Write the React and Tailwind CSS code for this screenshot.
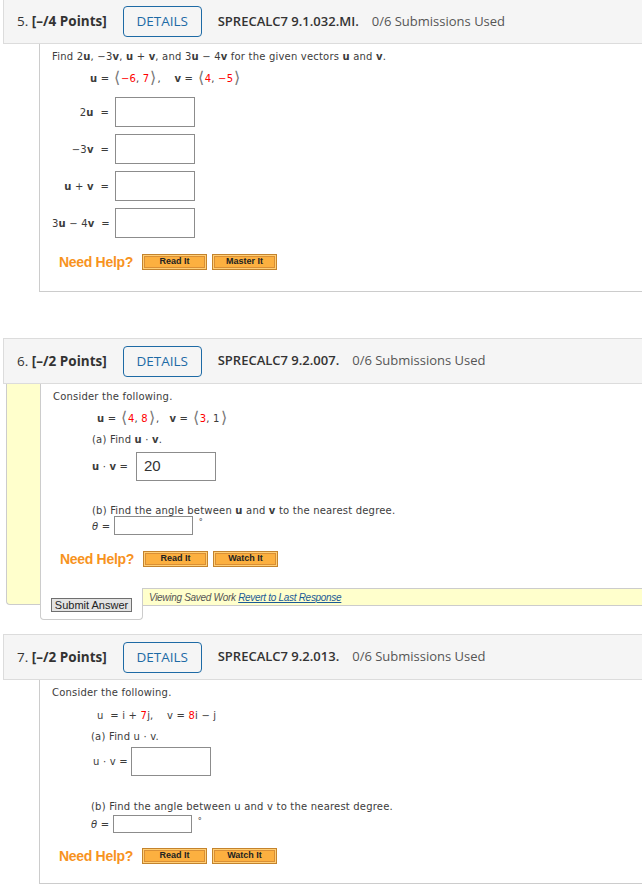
import React from "react";

const txt = "font-['DejaVu_Sans','Noto_Sans',sans-serif] text-[10px] tracking-[0.2px] text-[#3c3c3c]";
const red = "text-[#ff0000]";

function Header({ num, pts, code, cls }) {
  return (
    <div className={"ml-[3px] bg-[#f5f5f5] border-y border-l border-[#dcdcdc] flex items-center font-['Open_Sans',sans-serif] text-[13px] text-[#333] " + cls}>
      <span className="ml-[13px] whitespace-nowrap text-[13.5px]">
        {num}. <span className="font-bold">[–/{pts} Points]</span>
      </span>
      <div className="ml-[16px] h-[31px] w-[79px] border-[1.5px] border-[#1d6aa5] rounded-[4px] flex items-center justify-center text-[#1d6aa5] text-[13.5px]">
        DETAILS
      </div>
      <span className="ml-[16px] font-semibold whitespace-nowrap">{code}</span>
      <span className="ml-[13px] text-[#555] whitespace-nowrap">0/6 Submissions Used</span>
    </div>
  );
}

function Box({ w = "w-[80px]", h = "h-[30px]", children }) {
  return (
    <div className={"shrink-0 border border-[#8c8c8c] bg-white flex items-center pl-[7px] font-['Liberation_Sans',Arial,sans-serif] text-[15px] tracking-normal text-[#333] " + w + " " + h}>
      {children}
    </div>
  );
}

function HelpBtn({ label }) {
  return (
    <div className="h-[16px] w-[65px] bg-[#fcb040] border border-[#c4832c] shadow-[inset_0_0_0_1px_#ffcf77,inset_0_0_0_2px_#d98f35] flex items-center justify-center font-['Liberation_Sans',Arial,sans-serif] font-bold text-[9px] tracking-normal text-[#222]">
      {label}
    </div>
  );
}

function NeedHelp({ second, mt }) {
  return (
    <div className={"flex items-center ml-[7px] h-[16px] " + mt}>
      <span className="font-['Liberation_Sans',Arial,sans-serif] font-bold text-[14px] text-[#f7931e] tracking-[-0.3px]">Need Help?</span>
      <div className="ml-[9px] flex gap-[5px]">
        <HelpBtn label="Read It" />
        <HelpBtn label={second} />
      </div>
    </div>
  );
}

function Br({ c }) {
  return <span className="text-[16px] text-[#777] font-light leading-[10px] mx-[1px]">{c}</span>;
}

function Q5() {
  const rows = ["2u", "-3v", "u+v", "3u-4v"];
  return (
    <div>
      <Header num="5" pts="4" code="SPRECALC7 9.1.032.MI." cls="mt-[-1px] h-[45px]" />
      <div className={"ml-[39px] border-l border-b border-[#cccccc] pl-[12px] pt-[6px] pb-[21px] " + txt}>
        <div className="h-[14px] leading-[14px] whitespace-nowrap">
          Find 2<b>u</b>, −3<b>v</b>, <b>u</b> + <b>v</b>, and 3<b>u</b> − 4<b>v</b> for the given vectors <b>u</b> and <b>v</b>.
        </div>
        <div className="mt-[5px] ml-[38px] h-[18px] flex items-center whitespace-nowrap">
          <b>u</b>&nbsp;=&nbsp;<Br c="⟨" /><span className={red}>−6</span>,&nbsp;<span className={red}>7</span><Br c="⟩" />,&nbsp;&nbsp;&nbsp;&nbsp;<b>v</b>&nbsp;=&nbsp;<Br c="⟨" /><span className={red}>4</span>,&nbsp;<span className={red}>−5</span><Br c="⟩" />
        </div>
        <div className="mt-[10px] flex flex-col gap-[7px]">
          {rows.map((k) => (
            <div key={k} className="flex items-center">
              <div className="w-[57px] text-right whitespace-nowrap">
                {k === "2u" && <>2<b>u</b>&nbsp; =</>}
                {k === "-3v" && <>−3<b>v</b>&nbsp; =</>}
                {k === "u+v" && <><b>u</b> + <b>v</b>&nbsp; =</>}
                {k === "3u-4v" && <>3<b>u</b> − 4<b>v</b>&nbsp; =</>}
              </div>
              <div className="ml-[6px]">
                <Box />
              </div>
            </div>
          ))}
        </div>
        <NeedHelp second="Master It" mt="mt-[16px]" />
      </div>
    </div>
  );
}

function Q6() {
  return (
    <div>
      <Header num="6" pts="2" code="SPRECALC7 9.2.007." cls="mt-[46px] h-[46px]" />
      <div className="flex ml-[6px]">
        <div className="w-[34px] mb-[15px] bg-[#ffffcc] border-l border-b border-[#cccccc] rounded-bl-[4px]" />
        <div className="flex-1 flex flex-col">
          <div className={"bg-white border-l border-[#cccccc] pl-[12px] pt-[6px] h-[204px] " + txt}>
            <div className="h-[14px] leading-[14px]">Consider the following.</div>
            <div className="mt-[5px] ml-[44px] h-[18px] flex items-center whitespace-nowrap">
              <b>u</b>&nbsp;=&nbsp;<Br c="⟨" /><span className={red}>4</span>,&nbsp;<span className={red}>8</span><Br c="⟩" />,&nbsp;&nbsp;&nbsp;<b>v</b>&nbsp;=&nbsp;<Br c="⟨" /><span className={red}>3</span>,&nbsp;1<Br c="⟩" />
            </div>
            <div className="mt-[6px] ml-[39px] h-[14px] leading-[14px]">(a) Find <b>u</b> · <b>v</b>.</div>
            <div className="mt-[5px] ml-[39px] flex items-center">
              <span className="whitespace-nowrap w-[44px]"><b>u</b> · <b>v</b> =</span>
              <Box w="w-[80px]" h="h-[29px]">20</Box>
            </div>
            <div className="mt-[23px] ml-[39px] h-[14px] leading-[14px]">(b) Find the angle between <b>u</b> and <b>v</b> to the nearest degree.</div>
            <div className="mt-[-2px] ml-[39px] flex items-start h-[19px]">
              <span className="italic mt-[3px]">θ</span><span className="mt-[3px]">&nbsp;=&nbsp;</span>
              <Box w="w-[79px]" h="h-[19px]" />
              <span className="ml-[6px] text-[8px] mt-[1px]">°</span>
            </div>
            <NeedHelp second="Watch It" mt="mt-[16px]" />
          </div>
          <div className="flex">
            <div className="w-[103px] h-[32px] bg-white border-x border-b border-[#cccccc] rounded-b-[4px] flex justify-center pt-[10px]">
              <div className="h-[14px] w-[81px] bg-[#e3e3e3] border border-[#6f6f6f] flex items-center justify-center font-['Liberation_Sans',Arial,sans-serif] text-[11px] text-[#222]">
                Submit Answer
              </div>
            </div>
            <div className="flex-1 h-[18px] bg-[#ffffcc] border-y border-[#cccccc] flex items-center pl-[6px] font-['Liberation_Sans',Arial,sans-serif] italic text-[10px] text-[#555] tracking-[-0.3px] whitespace-nowrap">
              Viewing Saved Work&nbsp;<span className="underline text-[#1a5a96]">Revert to Last Response</span>
            </div>
          </div>
        </div>
      </div>
    </div>
  );
}

function Q7() {
  return (
    <div>
      <Header num="7" pts="2" code="SPRECALC7 9.2.013." cls="mt-[14px] h-[46px]" />
      <div className={"ml-[39px] border-l border-b border-[#cccccc] pl-[12px] pt-[6px] pb-[19px] " + txt}>
        <div className="h-[14px] leading-[14px]">Consider the following.</div>
        <div className="mt-[6px] ml-[45px] h-[18px] flex items-center whitespace-nowrap">
          u&nbsp; =&nbsp;i&nbsp;+&nbsp;<span className={red}>7</span>j,&nbsp;&nbsp;&nbsp;&nbsp;v&nbsp;=&nbsp;<span className={red}>8</span>i&nbsp;−&nbsp;j
        </div>
        <div className="mt-[6px] ml-[39px] h-[14px] leading-[14px]">(a) Find u · v.</div>
        <div className="mt-[3px] ml-[41px] flex items-center">
          <span className="whitespace-nowrap w-[38px]">u · v =</span>
          <Box w="w-[80px]" h="h-[29px]" />
        </div>
        <div className="mt-[24px] ml-[39px] h-[14px] leading-[14px]">(b) Find the angle between u and v to the nearest degree.</div>
        <div className="mt-[1px] ml-[39px] flex items-start h-[18px]">
          <span className="italic mt-[2px]">θ</span><span className="mt-[2px]">&nbsp;=&nbsp;</span>
          <Box w="w-[79px]" h="h-[18px]" />
          <span className="ml-[6px] text-[8px] mt-[1px]">°</span>
        </div>
        <NeedHelp second="Watch It" mt="mt-[15px]" />
      </div>
    </div>
  );
}

export default function App() {
  return (
    <div className="w-[642px] h-[892px] overflow-hidden bg-white">
      <Q5 />
      <Q6 />
      <Q7 />
    </div>
  );
}
